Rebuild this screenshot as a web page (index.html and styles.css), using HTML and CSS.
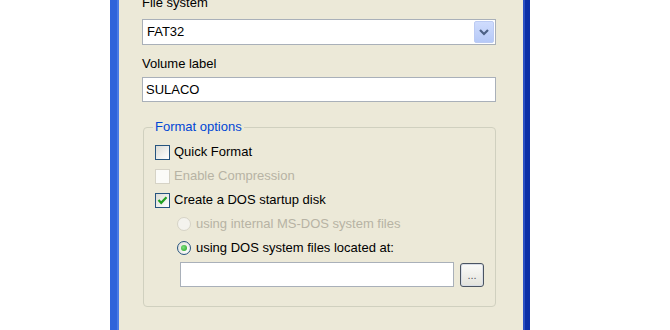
FILE: index.html
```html
<!DOCTYPE html>
<html>
<head>
<meta charset="utf-8">
<link rel="stylesheet" href="styles.css">
</head>
<body>
<div class="page">
  <div class="gutter"></div>
  <div class="dialog">
    <div class="content">
      <div class="label first">File system</div>
      <div class="combo">
        <span class="value">FAT32</span>
        <div class="drop">
          <svg width="12" height="8" viewBox="0 0 12 8"><path d="M2 2 L6 6 L10 2" fill="none" stroke="#4d6185" stroke-width="2.2"/></svg>
        </div>
      </div>
      <div class="label second">Volume label</div>
      <div class="textbox"><span class="value">SULACO</span></div>
      <fieldset class="group">
        <legend>Format options</legend>
        <div class="row">
          <span class="check"></span><span class="text">Quick Format</span>
        </div>
        <div class="row disabled">
          <span class="check off"></span><span class="text">Enable Compression</span>
        </div>
        <div class="row">
          <span class="check">
            <svg width="13" height="13" viewBox="0 0 13 13"><path d="M2.5 6 L5.2 8.8 L10.5 3.3" fill="none" stroke="#21a121" stroke-width="2.2"/></svg>
          </span><span class="text">Create a DOS startup disk</span>
        </div>
        <div class="row sub disabled">
          <span class="radio off"></span><span class="text">using internal MS-DOS system files</span>
        </div>
        <div class="row sub">
          <span class="radio on"><span class="dot"></span></span><span class="text">using DOS system files located at:</span>
        </div>
        <div class="pathrow">
          <div class="textbox path"></div>
          <div class="browse">...</div>
        </div>
      </fieldset>
    </div>
  </div>
</div>
</body>
</html>
```

FILE: styles.css
```css
html, body {
  margin: 0;
  padding: 0;
  background: #ffffff;
}
body {
  font-family: "Liberation Sans", Arial, sans-serif;
  font-size: 13px;
  color: #000;
}
.page {
  display: flex;
  height: 330px;
  overflow: hidden;
}
.gutter {
  width: 110px;
  flex: none;
}
.dialog {
  width: 420px;
  flex: none;
  box-sizing: border-box;
  background: #ece9d8;
  border-left: 7px solid #2f64da;
  border-right: 5px solid #0b2fa6;
  box-shadow: inset 2px 0 0 #4a7ce6, inset -2px 0 0 #2a50c4;
}
.content {
  padding: 0 29px 0 25px;
}
.label {
  line-height: 16px;
  height: 16px;
}
.label.first {
  margin-top: -5px;
  margin-bottom: 8px;
}
.label.second {
  margin-top: 11px;
  margin-bottom: 5px;
}
.combo, .textbox {
  box-sizing: border-box;
  background: #fff;
  border: 1px solid #a9b0b9;
  display: flex;
  align-items: center;
}
.combo {
  height: 26px;
  padding: 1px;
}
.textbox {
  height: 25px;
}
.value {
  flex: 1;
  padding-left: 3px;
  line-height: 16px;
}
.drop {
  width: 20px;
  height: 22px;
  box-sizing: border-box;
  background: linear-gradient(#cfdcfd, #b6c9f7);
  border: 1px solid #bccbf3;
  border-radius: 2px;
  display: flex;
  align-items: center;
  justify-content: center;
}
.group {
  margin: 17px 0 0 1px;
  padding: 5px 11px 19px 11px;
  border: 1px solid #d0d0bf;
  border-radius: 4px;
  min-width: 0;
}
.group legend {
  color: #0046d5;
  padding: 0 2px;
  margin-left: -2px;
  line-height: 16px;
}
.row {
  height: 24px;
  display: flex;
  align-items: center;
}
.row .text {
  line-height: 16px;
}
.row.sub {
  padding-left: 22px;
}
.disabled .text {
  color: #b7b3a4;
}
.check {
  width: 15px;
  height: 15px;
  box-sizing: border-box;
  border: 1px solid #26547f;
  background: linear-gradient(135deg, #dcdcd5, #ffffff);
  margin-right: 4px;
  display: flex;
  align-items: center;
  justify-content: center;
}
.check.off {
  border-color: #d6d3c6;
  background: #fbfbf8;
}
.radio {
  width: 14px;
  height: 14px;
  box-sizing: border-box;
  border: 1px solid #26547f;
  border-radius: 50%;
  background: radial-gradient(circle at 65% 65%, #ffffff, #dcdcd5);
  margin-right: 5px;
  display: flex;
  align-items: center;
  justify-content: center;
}
.radio.off {
  border-color: #d6d3c6;
  background: #f4f3ee;
}
.dot {
  width: 6px;
  height: 6px;
  border-radius: 50%;
  background: radial-gradient(circle at 40% 40%, #7ee07e, #21a121);
}
.pathrow {
  display: flex;
  margin-top: 2px;
  padding-left: 25px;
  gap: 6px;
  align-items: flex-start;
}
.textbox.path {
  flex: 1;
}
.browse {
  width: 24px;
  height: 24px;
  margin-top: 1px;
  box-sizing: border-box;
  border: 1px solid #4a5462;
  border-radius: 3px;
  background: linear-gradient(#fbfbf9, #e3e3dc);
  box-shadow: inset 0 0 0 1px #d8dde6;
  font-size: 11px;
  line-height: 11px;
  color: #505860;
  display: flex;
  align-items: flex-end;
  justify-content: center;
  padding-bottom: 5px;
  letter-spacing: 0;
}
```
